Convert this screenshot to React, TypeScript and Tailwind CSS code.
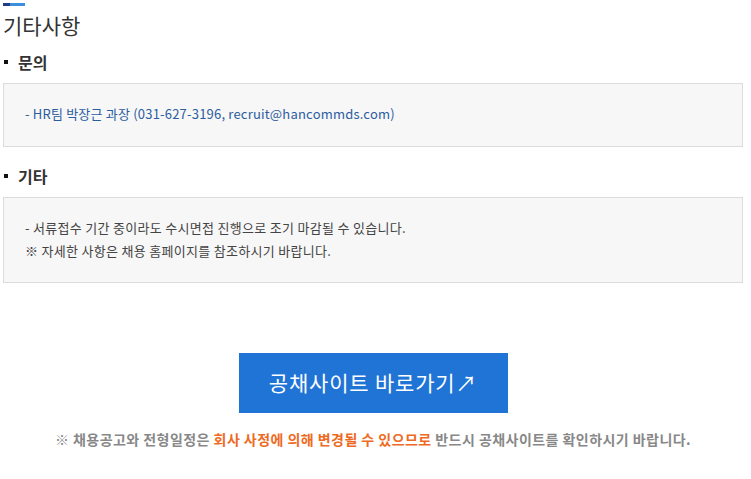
import React from 'react';

const font = { fontFamily: '"Noto Sans CJK KR", "Noto Sans", sans-serif' };

function SubTitle({ text }: { text: string }) {
  return (
    <h4 className="flex items-center gap-[10px] text-[16px] font-bold leading-[20px] text-[#333]">
      <span className="ml-[1px] block h-[4px] w-[4px] bg-[#111]" />
      {text}
    </h4>
  );
}

export default function App() {
  return (
    <div className="w-[751px] h-[479px] bg-white pl-[3px] pr-[8px]" style={font}>
      <div className="flex pt-[3px]">
        <span className="block h-[3px] w-[7px] bg-[#1b3f8b]" />
        <span className="block h-[3px] w-[15px] bg-[#3b8fdd]" />
      </div>
      <h3 className="mt-[6px] text-[21px] leading-[26px] text-[#333]">기타사항</h3>

      <div className="mt-[14px]">
        <SubTitle text="문의" />
      </div>
      <div className="mt-[11px] h-[64px] border border-[#dcdcdc] bg-[#f7f7f7] pl-[21px] pt-[20px] text-[13px] leading-[20px] tracking-[0.2px] text-[#2c5da0]">
        - HR팀 박장근 과장 (031-627-3196, recruit@hancommds.com)
      </div>

      <div className="mt-[19px]">
        <SubTitle text="기타" />
      </div>
      <div className="mt-[11px] h-[86px] border border-[#dcdcdc] bg-[#f7f7f7] pl-[21px] pt-[18px] text-[13px] leading-[23px] tracking-[0.3px] text-[#444]">
        <p>- 서류접수 기간 중이라도 수시면접 진행으로 조기 마감될 수 있습니다.</p>
        <p>※ 자세한 사항은 채용 홈페이지를 참조하시기 바랍니다.</p>
      </div>

      <div className="mt-[70px] flex justify-center">
        <a className="flex h-[60px] w-[269px] items-center justify-center bg-[#1f74d6] text-[21px] tracking-[0.8px] text-white">
          공채사이트 바로가기↗
        </a>
      </div>
      <p className="mt-[16px] text-center text-[14px] font-bold tracking-[0.45px] text-[#888]">
        ※ 채용공고와 전형일정은 <span className="text-[#ee6a23]">회사 사정에 의해 변경될 수 있으므로</span> 반드시 공채사이트를 확인하시기 바랍니다.
      </p>
    </div>
  );
}
